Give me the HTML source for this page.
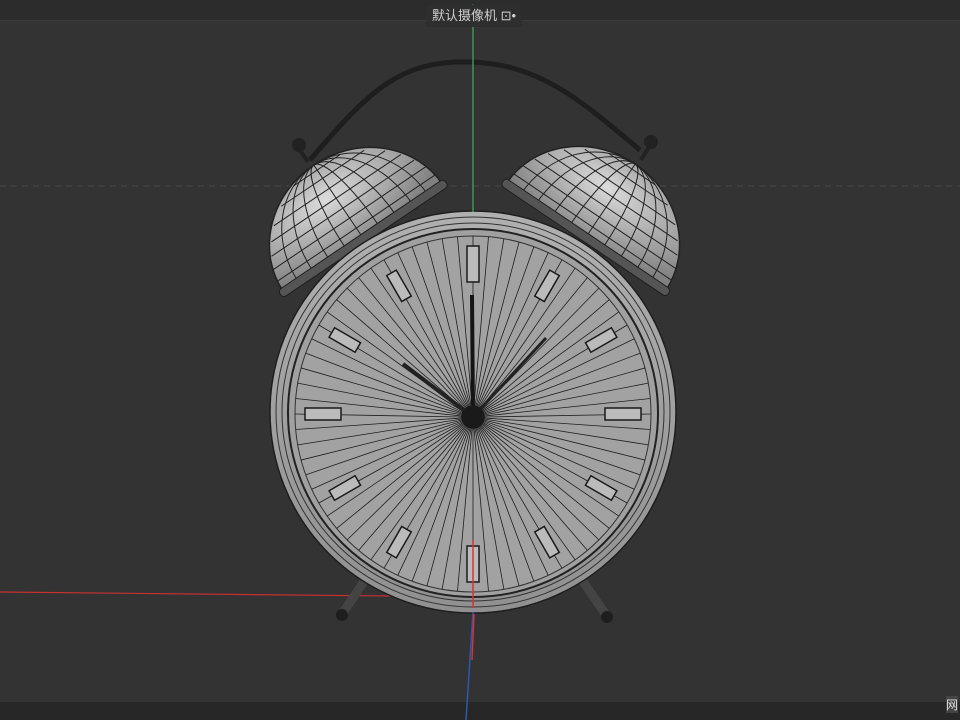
<!DOCTYPE html>
<html><head><meta charset="utf-8"><style>
html,body{margin:0;padding:0;background:#333;width:960px;height:720px;overflow:hidden}
#top{position:absolute;left:0;top:0;width:960px;height:20px;background:#2c2c2c;border-bottom:1px solid #3a3a3a}
#bot{position:absolute;left:0;top:702px;width:960px;height:18px;background:#272727}
#lbl{position:absolute;left:426px;top:5px;height:22px;padding:0 6px;background:#2e2e2e;color:#cfcfcf;font:13px "Liberation Sans","Noto Sans CJK SC",sans-serif;line-height:22px;border-radius:3px}
#nw{position:absolute;left:946px;top:696px;color:#ddd;font:12px "Liberation Sans","Noto Sans CJK SC",sans-serif;background:#444}
svg{position:absolute;left:0;top:0}
</style></head><body>
<div id="top"></div><div id="bot"></div>
<svg width="960" height="720" viewBox="0 0 960 720">
<defs>
<radialGradient id="dg" cx="0.45" cy="0.4" r="0.7"><stop offset="0" stop-color="#dcdcdc"/><stop offset="1" stop-color="#808080"/></radialGradient>
<linearGradient id="rg" x1="0" y1="0" x2="0" y2="1"><stop offset="0" stop-color="#b0b0b0"/><stop offset="1" stop-color="#909090"/></linearGradient>
<clipPath id="dc"><path d="M-96 0 A96 88 0 0 1 96 0 Z"/></clipPath>
</defs>
<line x1="0" y1="186" x2="960" y2="186" stroke="#4a4a4a" stroke-dasharray="6 5"/>
<line x1="0" y1="592" x2="390" y2="596" stroke="#c83030" stroke-width="1.2"/>
<path d="M310 160 C370 90 400 60 470 62 C540 64 580 100 640 150" fill="none" stroke="#1e1e1e" stroke-width="5"/>
<line x1="365" y1="580" x2="342" y2="614" stroke="#444" stroke-width="9"/>
<line x1="582" y1="580" x2="606" y2="615" stroke="#444" stroke-width="9"/>
<circle cx="342" cy="615" r="6" fill="#1e1e1e"/><circle cx="607" cy="617" r="6" fill="#1e1e1e"/>
<circle cx="299" cy="145" r="7" fill="#222"/><line x1="300" y1="150" x2="308" y2="162" stroke="#222" stroke-width="4"/>
<circle cx="651" cy="142" r="7" fill="#222"/><line x1="649" y1="147" x2="641" y2="160" stroke="#222" stroke-width="4"/>
<g transform="translate(363,238) rotate(-34)">
<path d="M-96 0 A96 88 0 0 1 96 0 Z" fill="url(#dg)" stroke="#222" stroke-width="1.5"/>
<g clip-path="url(#dc)" fill="none" stroke="#222" stroke-width="1">
<ellipse cx="0" cy="0" rx="20" ry="88"/><ellipse cx="0" cy="0" rx="40" ry="88"/><ellipse cx="0" cy="0" rx="60" ry="88"/><ellipse cx="0" cy="0" rx="78" ry="88"/><line x1="0" y1="0" x2="0" y2="-88"/>
<path d="M-95 -12 H95 M-92 -24 H92 M-86 -36 H86 M-78 -48 H78 M-67 -60 H67 M-50 -72 H50 M-28 -82 H28"/>
</g>
<rect x="-100" y="-4" width="200" height="9" rx="4" fill="#555" stroke="#1e1e1e"/>
</g>
<g transform="translate(586,237) rotate(34)">
<path d="M-96 0 A96 88 0 0 1 96 0 Z" fill="url(#dg)" stroke="#222" stroke-width="1.5"/>
<g clip-path="url(#dc)" fill="none" stroke="#222" stroke-width="1">
<ellipse cx="0" cy="0" rx="20" ry="88"/><ellipse cx="0" cy="0" rx="40" ry="88"/><ellipse cx="0" cy="0" rx="60" ry="88"/><ellipse cx="0" cy="0" rx="78" ry="88"/><line x1="0" y1="0" x2="0" y2="-88"/>
<path d="M-95 -12 H95 M-92 -24 H92 M-86 -36 H86 M-78 -48 H78 M-67 -60 H67 M-50 -72 H50 M-28 -82 H28"/>
</g>
<rect x="-100" y="-4" width="200" height="9" rx="4" fill="#555" stroke="#1e1e1e"/>
</g>
<ellipse cx="473" cy="412" rx="203" ry="201" fill="url(#rg)" stroke="#1e1e1e" stroke-width="1.5"/>
<ellipse cx="473" cy="412" rx="197" ry="195" fill="none" stroke="#333"/>
<ellipse cx="473" cy="412" rx="191" ry="189" fill="none" stroke="#333"/>
<ellipse cx="473" cy="413" rx="185" ry="184" fill="#a0a0a0" stroke="#222" stroke-width="2"/>
<ellipse cx="473" cy="414" rx="178" ry="178" fill="#a2a2a2" stroke="#333"/>
<g id="rays" stroke="#1e1e1e" stroke-width="0.8"></g>
<g id="ticks"></g>
<line x1="473" y1="417" x2="472" y2="295" stroke="#151515" stroke-width="4"/>
<line x1="473" y1="417" x2="403" y2="364" stroke="#222" stroke-width="4"/>
<line x1="473" y1="417" x2="546" y2="338" stroke="#222" stroke-width="3"/>
<circle cx="473" cy="417" r="12" fill="#1a1a1a"/>
<line x1="473" y1="5" x2="473" y2="212" stroke="#3fae6a" stroke-width="1.2"/>
<path d="M455 22 L473 5 L491 22" fill="none" stroke="#3fae6a"/>
<line x1="473" y1="540" x2="473" y2="608" stroke="#e03030" stroke-width="1.5"/>
<line x1="473" y1="612" x2="466" y2="720" stroke="#2a5ab0" stroke-width="1.5"/>
<line x1="474" y1="614" x2="472" y2="660" stroke="#e03030" stroke-width="1.5"/>
</svg>
<div id="lbl">默认摄像机 ⊡•</div>
<div id="nw">网</div>
<script>
var ns="http://www.w3.org/2000/svg",cx=473,cy=417,g=document.getElementById('rays');
for(var i=0;i<72;i++){var a=i/72*2*Math.PI,l=document.createElementNS(ns,'line');
l.setAttribute('x1',cx+12*Math.cos(a));l.setAttribute('y1',cy+12*Math.sin(a));
l.setAttribute('x2',473+178*Math.cos(a));l.setAttribute('y2',414+178*Math.sin(a));g.appendChild(l);}
var t=document.getElementById('ticks');
for(var h=0;h<12;h++){var an=h*30,rr=(h%3==0)?150:148,x=473+rr*Math.sin(an*Math.PI/180),y=414-rr*Math.cos(an*Math.PI/180);
var w=(h%3==0)?12:11,hh=(h%3==0)?36:30,e=document.createElementNS(ns,'rect');
e.setAttribute('x',-w/2);e.setAttribute('y',-hh/2);e.setAttribute('width',w);e.setAttribute('height',hh);
e.setAttribute('fill','#bbb');e.setAttribute('stroke','#1a1a1a');e.setAttribute('stroke-width','1.5');
e.setAttribute('transform','translate('+x+','+y+') rotate('+an+')');t.appendChild(e);}
</script>
</body></html>
